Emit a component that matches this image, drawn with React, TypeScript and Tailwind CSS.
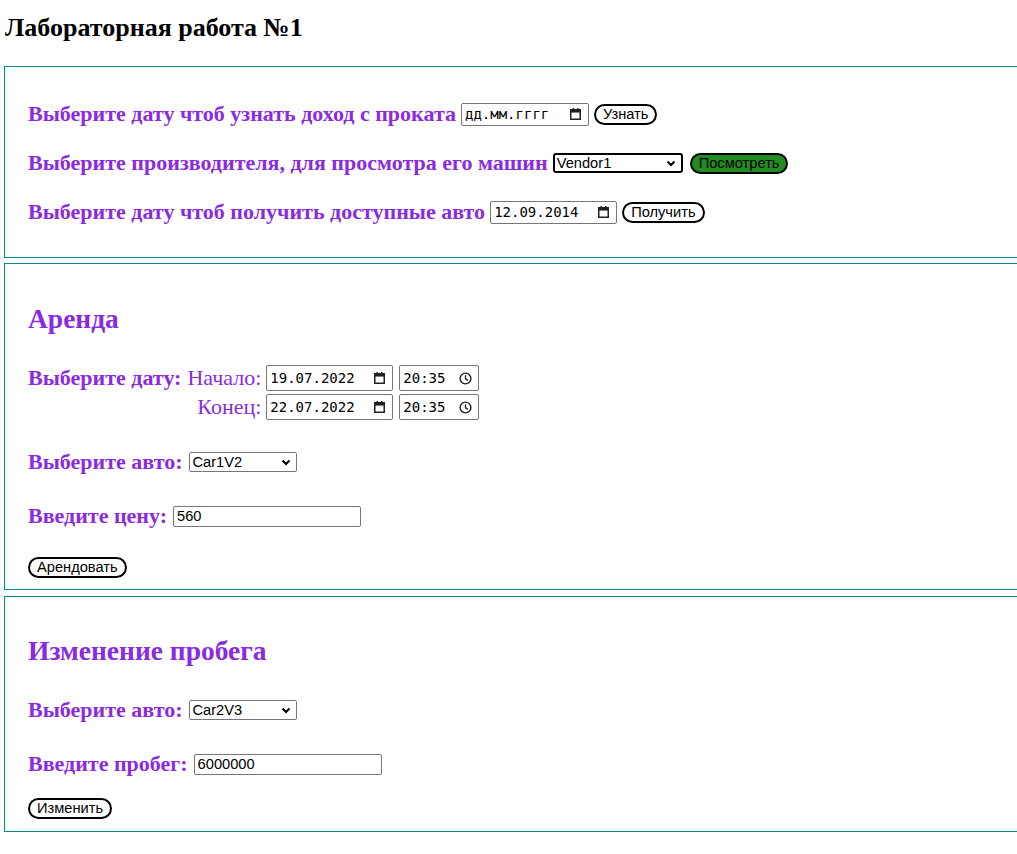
const serif = "font-['Liberation_Serif','Times_New_Roman',serif]";

function CalendarIcon() {
  return (
    <svg width="11" height="12" viewBox="0 0 11 12" className="shrink-0">
      <rect x="0.75" y="1.75" width="9.5" height="9.5" fill="none" stroke="#202020" strokeWidth="1.5" />
      <rect x="0.75" y="1.75" width="9.5" height="2.8" fill="#202020" />
      <rect x="2.5" y="0" width="1.5" height="2" fill="#202020" />
      <rect x="7" y="0" width="1.5" height="2" fill="#202020" />
    </svg>
  );
}

function ClockIcon() {
  return (
    <svg width="13" height="13" viewBox="0 0 13 13" className="shrink-0">
      <circle cx="6.5" cy="6.5" r="5.4" fill="none" stroke="#202020" strokeWidth="1.4" />
      <path d="M6.5 3.3 V6.8 L8.9 8.4" fill="none" stroke="#202020" strokeWidth="1.3" />
    </svg>
  );
}

function Chevron() {
  return (
    <svg width="10" height="7" viewBox="0 0 10 7" className="shrink-0">
      <path d="M1.5 1.5 L5 5 L8.5 1.5" fill="none" stroke="#000" strokeWidth="2" />
    </svg>
  );
}

function DateBox({ value, w = "w-[128px]", h = "h-[23px]" }: { value: string; w?: string; h?: string }) {
  return (
    <span
      className={`inline-flex ${w} ${h} items-center justify-between border border-[#767676] rounded-[2px] bg-white pl-[3px] pr-[7px] font-['DejaVu_Sans_Mono',monospace] text-[14px] text-black`}
    >
      <span>{value}</span>
      <CalendarIcon />
    </span>
  );
}

function TimeBox({ value }: { value: string }) {
  return (
    <span className="inline-flex w-[80px] h-[26px] items-center justify-between border border-[#767676] rounded-[2px] bg-white pl-[3px] pr-[6px] font-['DejaVu_Sans_Mono',monospace] text-[14px] text-black">
      <span>{value}</span>
      <ClockIcon />
    </span>
  );
}

function SelectBox({ value, w, dark = false }: { value: string; w: string; dark?: boolean }) {
  return (
    <span
      className={`inline-flex ${w} h-[20px] items-center justify-between bg-white pl-[2px] pr-[5px] font-['Liberation_Sans',Arial,sans-serif] text-[14.67px] text-black ${
        dark ? "border-2 border-black rounded-[3px]" : "border border-[#767676] rounded-[2px]"
      }`}
    >
      <span>{value}</span>
      <Chevron />
    </span>
  );
}

function TextBox({ value, w }: { value: string; w: string }) {
  return (
    <span
      className={`inline-flex ${w} h-[21px] items-center border border-[#767676] rounded-[2px] bg-white px-[3px] font-['Liberation_Sans',Arial,sans-serif] text-[14.67px] text-black`}
    >
      {value}
    </span>
  );
}

function Btn({ children, green = false }: { children: string; green?: boolean }) {
  return (
    <button
      className={`inline-flex h-[21px] items-center rounded-full border-2 border-black px-[7px] font-['Liberation_Sans',Arial,sans-serif] text-[14.67px] leading-none text-black ${
        green ? "bg-[#228b22] ml-[2px]" : "bg-white"
      }`}
    >
      {children}
    </button>
  );
}

function Label({ children }: { children: string }) {
  return <span className={`${serif} text-[22px] leading-[24px] font-bold text-[#8a2be2]`}>{children}</span>;
}

export default function App() {
  return (
    <div className="w-[1017px] h-[854px] overflow-hidden bg-white">
      <h1 className={`${serif} text-[26px] font-bold text-black leading-[26px] pl-[5px] pt-[15px] pb-[25px]`}>
        Лабораторная работа №1
      </h1>

      {/* Queries */}
      <div className="ml-1 w-[1100px] border border-[#008b8b] pl-[23px] pt-[35px] pb-[33px] flex flex-col gap-[25px]">
        <div className="flex h-[24px] items-center gap-[5px]">
          <Label>Выберите дату чтоб узнать доход с проката</Label>
          <DateBox value="дд.мм.гггг" />
          <Btn>Узнать</Btn>
        </div>
        <div className="flex h-[24px] items-center gap-[5px]">
          <Label>Выберите производителя, для просмотра его машин</Label>
          <SelectBox value="Vendor1" w="w-[130px]" dark />
          <Btn green>Посмотреть</Btn>
        </div>
        <div className="flex h-[24px] items-center gap-[5px]">
          <Label>Выберите дату чтоб получить доступные авто</Label>
          <DateBox value="12.09.2014" w="w-[127px]" />
          <Btn>Получить</Btn>
        </div>
      </div>

      {/* Rent */}
      <div className="ml-1 mt-[5px] w-[1100px] border border-[#008b8b] pl-[23px] pt-[39px] pb-[11px]">
        <h2 className={`${serif} text-[27.5px] font-bold text-[#8a2be2] leading-[32px]`}>Аренда</h2>
        <div className="mt-[30px] grid grid-cols-[auto_auto_auto_auto] justify-start items-center gap-y-[3px]">
          <Label>Выберите дату:</Label>
          <span className={`${serif} text-[22px] leading-[24px] text-[#8a2be2] justify-self-end pl-[6px] pr-[5px]`}>
            Начало:
          </span>
          <DateBox value="19.07.2022" w="w-[127px]" h="h-[26px]" />
          <span className="flex pl-[6px]">
            <TimeBox value="20:35" />
          </span>
          <span />
          <span className={`${serif} text-[22px] leading-[24px] text-[#8a2be2] justify-self-end pr-[5px]`}>Конец:</span>
          <DateBox value="22.07.2022" w="w-[127px]" h="h-[26px]" />
          <span className="flex pl-[6px]">
            <TimeBox value="20:35" />
          </span>
        </div>
        <div className="mt-[30px] flex h-[24px] items-center gap-[7px]">
          <Label>Выберите авто:</Label>
          <SelectBox value="Car1V2" w="w-[108px]" />
        </div>
        <div className="mt-[30px] flex h-[24px] items-center gap-[6px]">
          <Label>Введите цену:</Label>
          <TextBox value="560" w="w-[188px]" />
        </div>
        <div className="mt-[29px] flex">
          <Btn>Арендовать</Btn>
        </div>
      </div>

      {/* Mileage */}
      <div className="ml-1 mt-[6px] w-[1100px] border border-[#008b8b] pl-[23px] pt-[38px] pb-[12px]">
        <h2 className={`${serif} text-[27.5px] font-bold text-[#8a2be2] leading-[32px]`}>Изменение пробега</h2>
        <div className="mt-[31px] flex h-[24px] items-center gap-[7px]">
          <Label>Выберите авто:</Label>
          <SelectBox value="Car2V3" w="w-[108px]" />
        </div>
        <div className="mt-[30px] flex h-[24px] items-center gap-[6px]">
          <Label>Введите пробег:</Label>
          <TextBox value="6000000" w="w-[188px]" />
        </div>
        <div className="mt-[22px] flex">
          <Btn>Изменить</Btn>
        </div>
      </div>
    </div>
  );
}
